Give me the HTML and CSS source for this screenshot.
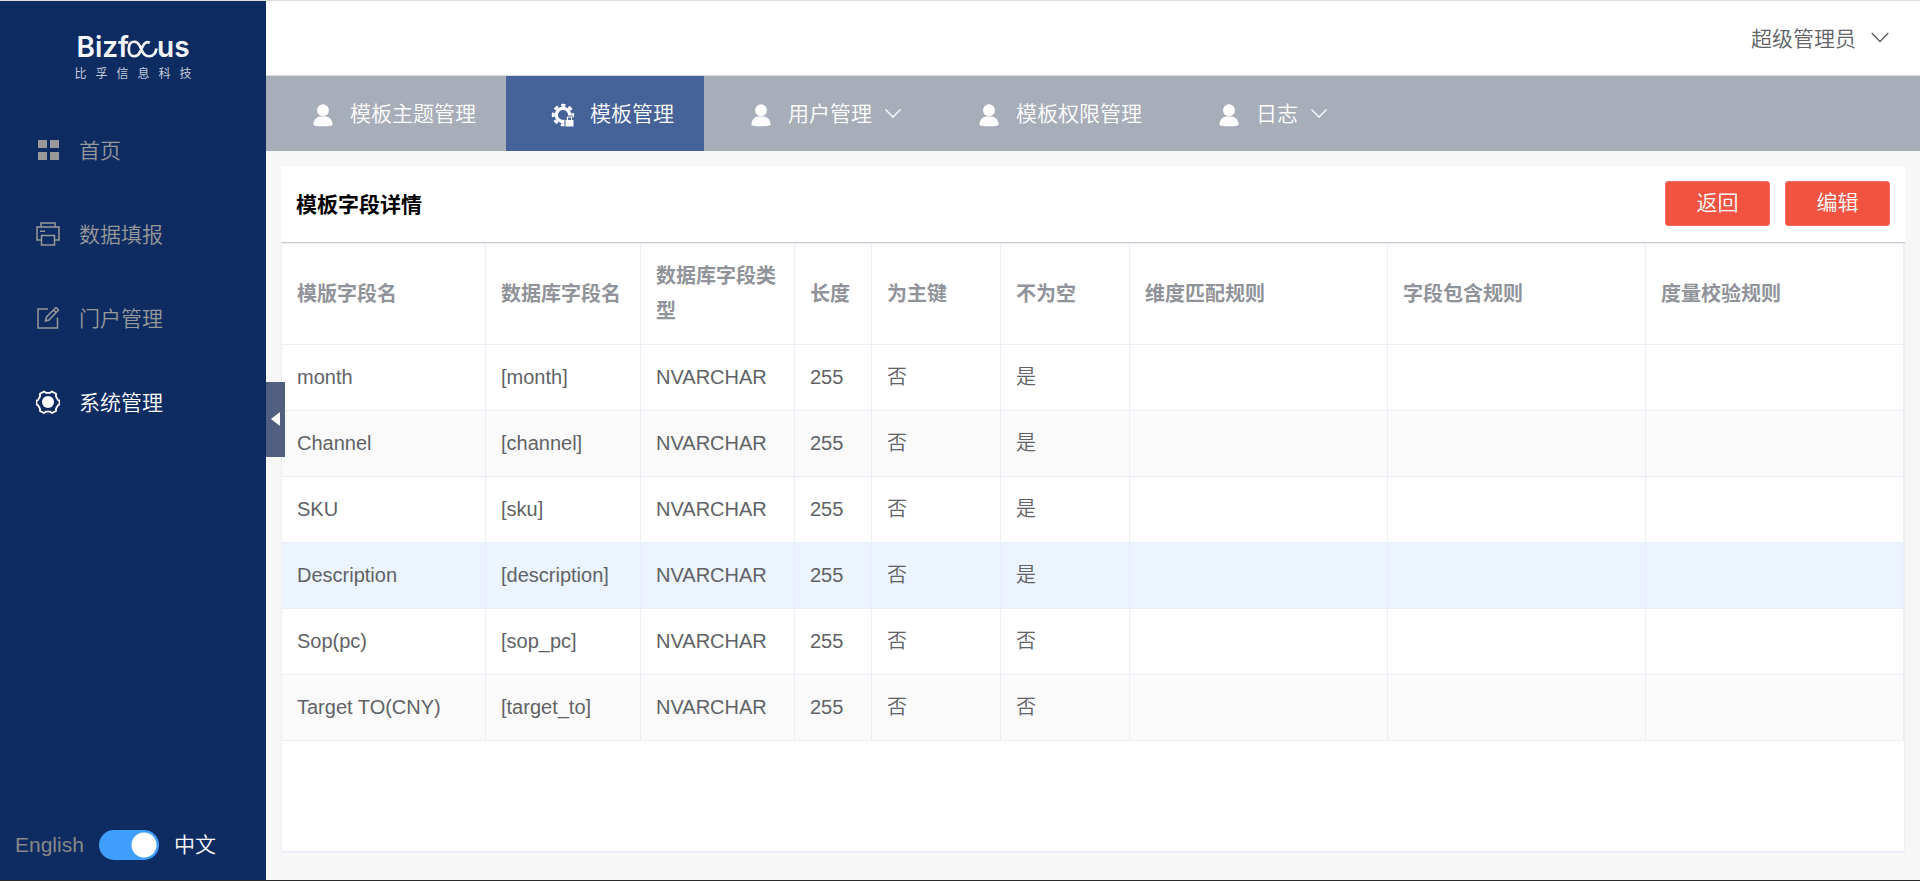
FILE: index.html
```html
<!DOCTYPE html>
<html lang="zh-CN">
<head>
<meta charset="utf-8">
<title>模板字段详情</title>
<link rel="stylesheet" href="styles.css">
</head>
<body>
<svg class="sprite" aria-hidden="true">
  <symbol id="user" viewBox="0 0 24 24"><ellipse cx="12" cy="7.300" rx="5.900" ry="6"/><path d="M2.500 21.500c0-5 3.500-8 7-8h5c3.500 0 7 3 7 8 0 1.400-2.500 1.700-9.500 1.700s-9.500-.3-9.500-1.700z"/></symbol>
  <symbol id="down" viewBox="0 0 18 18"><path d="M1.500 5.500 9 13l7.500-7.500" fill="none" stroke="currentColor" stroke-width="1.300"/></symbol>
</svg>
<div class="app">
  <aside class="sidebar">
    <div class="logo">
      <div class="wordmark"><span>Bizf</span><svg class="swirl" viewBox="0 0 32 20" aria-label="oc"><path d="M23.500 3.500C20.500 2 18 3.500 16 7.500L13.500 13C12 16.500 10.500 17.500 7.500 17.500 3.500 17.500 1.800 14.500 1.800 10S3.500 2.500 7.500 2.500c3 0 4.500 1.500 6 5L16 13c1.500 3 3.500 4.500 7 4.500 4.500 0 6.500-2.500 7.500-8"/></svg><span>us</span></div>
      <div class="tagline"><span>比</span><span>孚</span><span>信</span><span>息</span><span>科</span><span>技</span></div>
    </div>
    <nav class="menu">
      <a href="#"><svg viewBox="0 0 24 24"><path fill="currentColor" d="M2 2h9v8H2zM14 2h9v8h-9zM2 14h9v8H2zM14 14h9v8h-9z"/></svg><span>首页</span></a>
      <a href="#"><svg viewBox="0 0 24 24"><path class="line" d="M5 5V1h14v4M5 18H1V5h22v13h-4M5.500 13.500h13v9.500h-13zM4 9.200h5"/></svg><span>数据填报</span></a>
      <a href="#"><svg viewBox="0 0 24 24"><path class="line" d="M12 3H2v19h19.500V11.500M9.500 15l1-4L20 1.500l2.500 2.500-9.500 10zM17.500 4l2.500 2.500"/></svg><span>门户管理</span></a>
      <a href="#" class="current"><svg viewBox="0 0 24 24"><circle cx="12" cy="12" r="6" fill="currentColor"/><path class="gear" d="M8 1.500l2 1.300h4l2-1.300 4 2.300v2.700l2 3.500 1.500.5v4l-1.500.7-2 3.500v2.300l-4 2-2-1.300h-4l-2 1.300-4-2v-2.300l-2-3.500-1.500-.7v-4l1.500-.5 2-3.500V3.800z"/></svg><span>系统管理</span></a>
    </nav>
    <div class="language">
      <label for="lang">English</label>
      <input id="lang" type="checkbox" role="switch" checked>
      <label for="lang" class="chosen">中文</label>
    </div>
  </aside>
  <main class="main">
    <button class="collapse" aria-label="收起"></button>
    <header class="topbar"><button class="account">超级管理员<svg viewBox="0 0 18 18"><use href="#down"/></svg></button></header>
    <nav class="tabs">
      <a href="#"><svg class="icon"><use href="#user"/></svg><span>模板主题管理</span></a>
      <a href="#" class="active"><svg class="icon" viewBox="0 0 24 24"><g fill="none" stroke="currentColor"><circle cx="12" cy="12" r="6.700" stroke-width="3.200"/><circle cx="12" cy="12" r="9.700" stroke-width="3" stroke-dasharray="4.200 3.418" stroke-dashoffset="2.100"/></g><path class="lockback" d="M13.500 15.500h2v-3h6v3h2V24h-10z"/><path fill="currentColor" d="M14.500 17h8v6.500h-8z"/><path d="M16.500 17v-3h4v3" fill="none" stroke="currentColor" stroke-width="1.200"/></svg><span>模板管理</span></a>
      <a href="#"><svg class="icon"><use href="#user"/></svg><span>用户管理</span><svg class="arrow"><use href="#down"/></svg></a>
      <a href="#"><svg class="icon"><use href="#user"/></svg><span>模板权限管理</span></a>
      <a href="#"><svg class="icon"><use href="#user"/></svg><span>日志</span><svg class="arrow"><use href="#down"/></svg></a>
    </nav>
    <section class="card">
      <div class="cardhead">
        <h1>模板字段详情</h1>
        <button>返回</button>
        <button>编辑</button>
      </div>
      <div class="tablebox">
        <table>
          <colgroup><col class="w-name"><col class="w-db"><col class="w-type"><col class="w-len"><col class="w-flag"><col class="w-flag"><col class="w-rule"><col class="w-rule"><col class="w-rule"></colgroup>
          <thead><tr><th>模版字段名</th><th>数据库字段名</th><th>数据库字段类型</th><th>长度</th><th>为主键</th><th>不为空</th><th>维度匹配规则</th><th>字段包含规则</th><th>度量校验规则</th></tr></thead>
          <tbody>
            <tr><td>month</td><td>[month]</td><td>NVARCHAR</td><td>255</td><td>否</td><td>是</td><td></td><td></td><td></td></tr>
            <tr><td>Channel</td><td>[channel]</td><td>NVARCHAR</td><td>255</td><td>否</td><td>是</td><td></td><td></td><td></td></tr>
            <tr><td>SKU</td><td>[sku]</td><td>NVARCHAR</td><td>255</td><td>否</td><td>是</td><td></td><td></td><td></td></tr>
            <tr class="hovered"><td>Description</td><td>[description]</td><td>NVARCHAR</td><td>255</td><td>否</td><td>是</td><td></td><td></td><td></td></tr>
            <tr><td>Sop(pc)</td><td>[sop_pc]</td><td>NVARCHAR</td><td>255</td><td>否</td><td>否</td><td></td><td></td><td></td></tr>
            <tr><td>Target TO(CNY)</td><td>[target_to]</td><td>NVARCHAR</td><td>255</td><td>否</td><td>否</td><td></td><td></td><td></td></tr>
          </tbody>
        </table>
      </div>
    </section>
  </main>
</div>
</body>
</html>
```
FILE: styles.css
```css
* { box-sizing: border-box; }
body { margin: 0; font-family: "Liberation Sans", "Noto Sans CJK SC", sans-serif; font-size: 21px; font-weight: 350; color: #606266; background: #f7f7f7; }
a { color: inherit; text-decoration: none; }
button { font: inherit; border: 0; cursor: pointer; }
.sprite { display: none; }
.app { display: flex; min-height: 100vh; border-top: 1px solid #dcdcdc; border-bottom: 1px solid #2b2b2b; }

.sidebar { flex: none; width: 266px; display: flex; flex-direction: column; background: #0e2c62; color: #999; }
.logo { height: 107px; padding-top: 30px; display: flex; flex-direction: column; align-items: center; color: #f4f6fa; }
.wordmark { display: flex; align-items: center; font: 600 28px/32px Inter, sans-serif; }
.swirl { width: 31px; height: 20px; margin: 3px -1px 0 -2px; fill: none; stroke: currentColor; stroke-width: 2.8; }
.tagline { width: 117px; margin-top: 2px; display: flex; justify-content: space-between; font-size: 12px; line-height: 18px; font-weight: 400; color: #c3cbd9; }
.menu a { display: flex; align-items: center; gap: 19px; height: 84px; padding-left: 36px; }
.menu svg { width: 24px; height: 24px; }
.menu span, .tabs span { padding-bottom: 3px; }
.menu .current { color: #fff; }
.line { fill: none; stroke: currentColor; stroke-width: 1.5; }
.gear { fill: none; stroke: currentColor; stroke-width: 1.8; }
.language { margin-top: auto; padding: 0 15px 20px; display: flex; align-items: center; gap: 15px; line-height: 30px; color: #888; }
.language .chosen { color: #fff; }
.language input { appearance: none; margin: 0; width: 60px; height: 30px; border-radius: 15px; background: radial-gradient(circle 12px at 45px 15px, #fff 12px, #409eff 13px); }

.main { position: relative; flex: 1; min-width: 0; display: flex; flex-direction: column; }
.collapse { position: absolute; left: 0; top: calc(50% - 59px); width: 19px; height: 75px; padding: 0 5px; background: #516080; }
.collapse::before { content: ""; display: block; border: 7px solid transparent; border-left: 0; border-right: 9px solid #fff; }
.topbar { height: 75px; display: flex; align-items: center; justify-content: flex-end; padding: 0 30px 2px 0; background: #fff; border-bottom: 1px solid #d3d9e4; }
.account { display: flex; align-items: center; gap: 14px; padding: 0; background: none; color: #606266; }
.account svg { width: 20px; height: 20px; }
.tabs { display: flex; height: 75px; background: #a7adb9; color: #fff; }
.tabs a { display: flex; align-items: center; padding: 0 30px 0 45px; }
.tabs .active { background: #466399; }
.icon { width: 24px; height: 24px; margin: 3px 15px 0 0; fill: currentColor; }
.arrow { width: 18px; height: 18px; margin-left: 12px; margin-bottom: 2px; }
.lockback { fill: #466399; }

.card { flex: 1; display: flex; flex-direction: column; margin: 15px 15px 27px; background: #fff; }
.cardhead { display: flex; align-items: center; gap: 15px; height: 77px; padding: 0 15px 2px; border-bottom: 1px solid #cdced2; }
h1 { flex: 1; margin: 0; font-size: 21px; font-weight: 700; color: #000; }
.cardhead button { width: 105px; height: 45px; border: 1px solid #f56c6c; border-radius: 3px; background: #f15340; color: #fff; line-height: 30px; }
.tablebox { flex: 1; border: 1px solid #ebeef5; border-bottom-width: 2px; }
table { width: 100%; table-layout: fixed; border-collapse: separate; border-spacing: 0; font-size: 20px; line-height: 35px; }
th, td { padding: 15px 14px 15px 15px; text-align: left; border-right: 1px solid #ebeef5; border-bottom: 1px solid #ebeef5; }
th { color: #909399; font-weight: 700; }
td { height: 66px; }
tbody tr:nth-child(even) { background: #fafafa; }
tbody tr.hovered:nth-child(n) { background: #ebf4ff; }
.w-name { width: 204px; }
.w-db { width: 155px; }
.w-type { width: 154px; }
.w-len { width: 77px; }
.w-flag { width: 129px; }
.w-rule { width: 258px; }
```
